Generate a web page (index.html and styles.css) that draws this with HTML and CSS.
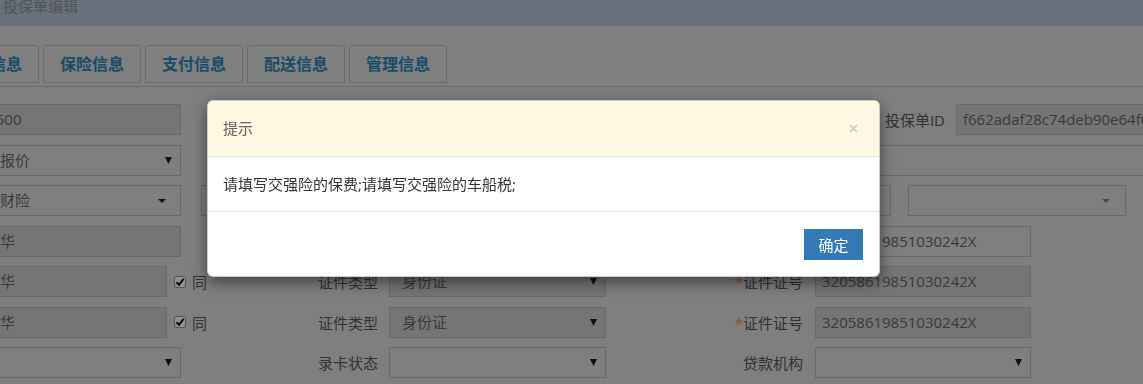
FILE: index.html
```html
<!DOCTYPE html>
<html lang="zh-CN">
<head>
    <meta charset="UTF-8">
    <title>投保单编辑</title>
    <link rel="stylesheet" href="styles.css">
</head>
<body>
    <div class="page">
        <div class="title-bar">投保单编辑</div>

        <ul class="tabs">
            <li>基本信息</li>
            <li>保险信息</li>
            <li>支付信息</li>
            <li>配送信息</li>
            <li>管理信息</li>
        </ul>

        <div class="form">
            <!-- 价格 / 投保单ID -->
            <div class="row">
                <div class="cell-a"><div class="field readonly w-a">128500</div></div>
                <label class="lbl lbl-b">车辆价格</label>
                <div class="field readonly ctl-b"></div>
                <label class="lbl lbl-id">投保单ID</label>
                <div class="field readonly ctl-id">f662adaf28c74deb90e64f0c1d3a5b79</div>
            </div>

            <!-- 状态 -->
            <div class="row">
                <div class="cell-a">
                    <div class="field select w-a">等待报价
                        <svg class="arrow" width="7" height="7" viewBox="0 0 7 7"><polygon points="0,0 7,0 3.5,7"/></svg>
                    </div>
                </div>
                <div class="field wide"></div>
            </div>

            <!-- 保险公司 -->
            <div class="row multi">
                <div class="field select w-a">人保财险
                    <span class="caret"></span>
                </div>
                <div class="field w-m1"></div>
                <div class="field w-m2"></div>
                <div class="field select w-m3">
                    <span class="caret light"></span>
                </div>
            </div>

            <!-- 投保人 -->
            <div class="row">
                <div class="cell-a"><div class="field readonly w-a">张建华</div></div>
                <label class="lbl lbl-b">证件类型</label>
                <div class="field select readonly ctl-b">身份证
                    <svg class="arrow" width="7" height="7" viewBox="0 0 7 7"><polygon points="0,0 7,0 3.5,7"/></svg>
                </div>
                <label class="lbl lbl-c"><em>*</em>证件证号</label>
                <div class="field ctl-c id-no">32058619851030242X</div>
            </div>

            <!-- 被保险人 -->
            <div class="row">
                <div class="cell-a">
                    <div class="field readonly w-s">张建华</div>
                    <span class="check">
                        <svg width="10" height="10" viewBox="0 0 10 10"><path d="M1.5 5.2 L4 7.8 L8.6 1.8" /></svg>
                    </span>
                    <span class="same">同</span>
                </div>
                <label class="lbl lbl-b">证件类型</label>
                <div class="field select readonly ctl-b">身份证
                    <svg class="arrow" width="7" height="7" viewBox="0 0 7 7"><polygon points="0,0 7,0 3.5,7"/></svg>
                </div>
                <label class="lbl lbl-c"><em>*</em>证件证号</label>
                <div class="field readonly ctl-c id-no">32058619851030242X</div>
            </div>

            <!-- 车主 -->
            <div class="row">
                <div class="cell-a">
                    <div class="field readonly w-s">张建华</div>
                    <span class="check">
                        <svg width="10" height="10" viewBox="0 0 10 10"><path d="M1.5 5.2 L4 7.8 L8.6 1.8" /></svg>
                    </span>
                    <span class="same">同</span>
                </div>
                <label class="lbl lbl-b">证件类型</label>
                <div class="field select readonly ctl-b">身份证
                    <svg class="arrow" width="7" height="7" viewBox="0 0 7 7"><polygon points="0,0 7,0 3.5,7"/></svg>
                </div>
                <label class="lbl lbl-c"><em>*</em>证件证号</label>
                <div class="field readonly ctl-c id-no">32058619851030242X</div>
            </div>

            <!-- 录卡 / 贷款 -->
            <div class="row">
                <div class="cell-a">
                    <div class="field select w-a">
                        <svg class="arrow" width="7" height="7" viewBox="0 0 7 7"><polygon points="0,0 7,0 3.5,7"/></svg>
                    </div>
                </div>
                <label class="lbl lbl-b">录卡状态</label>
                <div class="field select ctl-b">
                    <svg class="arrow" width="7" height="7" viewBox="0 0 7 7"><polygon points="0,0 7,0 3.5,7"/></svg>
                </div>
                <label class="lbl lbl-c">贷款机构</label>
                <div class="field select ctl-c">
                    <svg class="arrow" width="7" height="7" viewBox="0 0 7 7"><polygon points="0,0 7,0 3.5,7"/></svg>
                </div>
            </div>
        </div>
    </div>

    <div class="backdrop"></div>

    <div class="modal">
        <div class="modal-header">
            <span class="close">
                <svg width="9" height="9" viewBox="0 0 9 9"><path d="M1 1 L8 8 M8 1 L1 8" /></svg>
            </span>
            <h4>提示</h4>
        </div>
        <div class="modal-body">请填写交强险的保费;请填写交强险的车船税;</div>
        <div class="modal-footer">
            <button class="btn-primary">确定</button>
        </div>
    </div>
</body>
</html>
```

FILE: styles.css
```css
html, body {
    overflow: hidden;
}
body {
    margin: 0;
    font-family: "Open Sans", "Noto Sans CJK SC", sans-serif;
    font-size: 15px;
    color: #555;
    background: #d4d4d4;
}
.title-bar {
    height: 26px;
    line-height: 12px;
    padding: 0 3px;
    background: #acbbd4;
    color: #8a8a8a;
}
.tabs {
    list-style: none;
    margin: 19px 0 0 -61px;
    padding: 0 0 3px;
    display: flex;
    border-bottom: 1px solid #b2b2b2;
}
.tabs li {
    width: 98px;
    height: 38px;
    box-sizing: border-box;
    margin: 0 2px;
    border: 1px solid #b2b2b2;
    border-radius: 3px 3px 0 0;
    text-align: center;
    line-height: 36px;
    font-size: 16px;
    font-weight: bold;
    color: #2b7fad;
}

.form {
    margin: 17px 0 0 -43px;
    display: flex;
    flex-direction: column;
    gap: 9.5px;
}
.row {
    display: flex;
    align-items: center;
    height: 31px;
}
.field {
    position: relative;
    box-sizing: border-box;
    height: 31px;
    line-height: 29px;
    padding: 0 12px;
    border: 1px solid #b0b0b0;
    background: #d4d4d4;
    color: #616161;
    white-space: nowrap;
    overflow: hidden;
    flex-shrink: 0;
}
.field.readonly {
    background: #c4c4c4;
}
.cell-a {
    width: 249px;
    display: flex;
    align-items: center;
    flex-shrink: 0;
}
.w-a { width: 224px; }
.w-s { width: 210px; }
.lbl {
    box-sizing: border-box;
    flex-shrink: 0;
    text-align: right;
    color: #535353;
}
.lbl em {
    font-style: normal;
    color: #e0894e;
}
.lbl-b { width: 183px; padding-right: 11px; }
.ctl-b { width: 217px; }
.lbl-c { width: 209px; padding-right: 12px; }
.ctl-c { width: 216px; }
.lbl-id { width: 350px; padding-right: 11px; }
.ctl-id { width: 260px; padding: 0 6px; }
.id-no { padding: 0 6px; }
.wide {
    width: 820px;
    margin-left: 140px;
}

.multi .w-m1 { width: 339px; margin-left: 20px; }
.multi .w-m2 { width: 331px; margin-left: 20px; }
.multi .w-m3 { width: 218px; margin-left: 17px; }

.select .arrow {
    position: absolute;
    right: 8px;
    top: 11px;
    fill: #1a1a1a;
}
.caret {
    position: absolute;
    right: 14px;
    top: 13px;
    border-top: 4px solid #1a1a1a;
    border-left: 4px solid transparent;
    border-right: 4px solid transparent;
}
.caret.light {
    right: 15px;
    border-top-color: #7a7a7a;
}

.check {
    width: 12px;
    height: 12px;
    box-sizing: border-box;
    margin-left: 7px;
    border: 1px solid #8a8a8a;
    border-radius: 2px;
    background: #f4f4f4;
    display: flex;
    align-items: center;
    justify-content: center;
}
.check path {
    fill: none;
    stroke: #111;
    stroke-width: 2;
}
.same {
    margin-left: 6px;
    color: #535353;
}

.backdrop {
    position: fixed;
    inset: 0;
    background: rgba(0, 0, 0, 0.4);
}
.modal {
    position: absolute;
    left: 207px;
    top: 100px;
    width: 673px;
    box-sizing: border-box;
    background: #fff;
    border: 1px solid rgba(0, 0, 0, 0.2);
    border-radius: 6px;
    box-shadow: 0 5px 15px rgba(0, 0, 0, 0.5);
    overflow: hidden;
}
.modal-header {
    padding: 15px;
    background: #fef8e3;
    border-bottom: 1px solid #e5e5e5;
}
.modal-header h4 {
    margin: 0;
    font-size: 15px;
    font-weight: normal;
    line-height: 25px;
    color: #666;
}
.close {
    float: right;
    margin: 8px 6px 0 0;
    line-height: 0;
}
.close path {
    stroke: #c8c8c8;
    stroke-width: 1.6;
}
.modal-body {
    padding: 15px;
    line-height: 24px;
    color: #333;
}
.modal-footer {
    padding: 17px 16px 16px;
    border-top: 1px solid #e5e5e5;
    text-align: right;
    line-height: 0;
}
.btn-primary {
    width: 59px;
    height: 31px;
    padding: 0;
    border: none;
    border-radius: 0;
    background: #337ab7;
    color: #fff;
    font-family: "Open Sans", "Noto Sans CJK SC", sans-serif;
    font-size: 15px;
    cursor: pointer;
}
```
